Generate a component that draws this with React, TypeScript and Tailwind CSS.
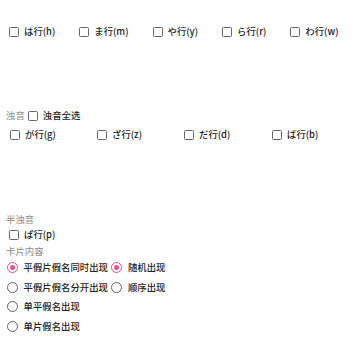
import React from "react";

const font = { fontFamily: '"Noto Sans CJK SC", "Noto Sans", sans-serif' };

function Box() {
  return <span className="w-[10px] h-[10px] border border-[#666] rounded-[1.5px] bg-white shrink-0" />;
}

function Check({ label, className = "" }: { label: string; className?: string }) {
  return (
    <div className={"flex items-center gap-[5px] " + className}>
      <Box />
      <span className="text-[#222] font-medium">{label}</span>
    </div>
  );
}

function Radio({ label, checked = false, className = "" }: { label: string; checked?: boolean; className?: string }) {
  return (
    <div className={"flex items-center gap-[5.5px] " + className}>
      {checked ? (
        <span className="w-[11px] h-[11px] rounded-full border-[1.5px] border-[#e8508a] flex items-center justify-center shrink-0">
          <span className="w-[5px] h-[5px] rounded-full bg-[#e8508a]" />
        </span>
      ) : (
        <span className="w-[11px] h-[11px] rounded-full border border-[#5f5f5f] shrink-0" />
      )}
      <span className="text-[#222] font-medium">{label}</span>
    </div>
  );
}

export default function App() {
  return (
    <div className="w-[360px] h-[360px] bg-white flex flex-col text-[9.4px] leading-none" style={font}>
      <div className="mt-[25px] h-[14px] pl-[9px] flex items-center gap-[24px]">
        <Check label="は行(h)" />
        <Check label="ま行(m)" />
        <Check label="や行(y)" />
        <Check label="ら行(r)" />
        <Check label="わ行(w)" />
      </div>

      <div className="mt-[70px] h-[14px] pl-[6px] flex items-center gap-[3px]">
        <span className="text-[#8c8c8c]">浊音</span>
        <Check label="浊音全选" />
      </div>

      <div className="mt-[5px] h-[14px] pl-[10px] flex items-center">
        <Check label="が行(g)" className="w-[87px]" />
        <Check label="ざ行(z)" className="w-[87px]" />
        <Check label="だ行(d)" className="w-[88px]" />
        <Check label="ば行(b)" className="w-[87px]" />
      </div>

      <div className="mt-[71px] h-[14px] pl-[6px] flex items-center">
        <span className="text-[#8c8c8c]">半浊音</span>
      </div>
      <div className="mt-[1px] h-[14px] pl-[9px] flex items-center">
        <Check label="ぱ行(p)" />
      </div>
      <div className="mt-[3px] h-[13px] pl-[6px] flex items-center">
        <span className="text-[#8c8c8c]">卡片内容</span>
      </div>

      <div className="flex flex-col pl-[7px]">
        <div className="h-[19.5px] flex items-center gap-[3.5px]">
          <Radio label="平假片假名同时出现" checked />
          <Radio label="随机出现" checked />
        </div>
        <div className="h-[19.5px] flex items-center gap-[3.5px]">
          <Radio label="平假片假名分开出现" />
          <Radio label="顺序出现" />
        </div>
        <div className="h-[19.5px] flex items-center">
          <Radio label="单平假名出现" />
        </div>
        <div className="h-[19.5px] flex items-center">
          <Radio label="单片假名出现" />
        </div>
      </div>
    </div>
  );
}
